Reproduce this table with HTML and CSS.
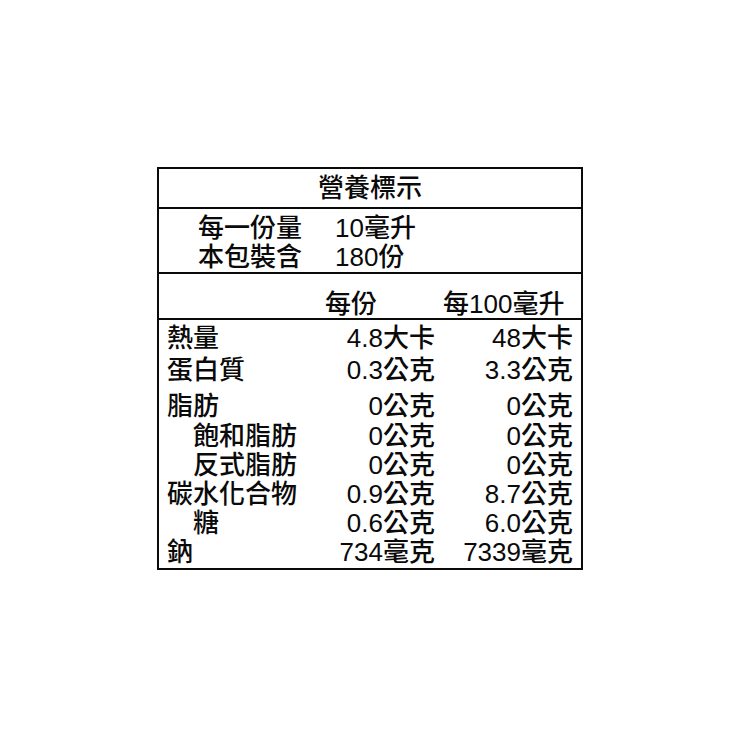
FILE: index.html
```html
<!DOCTYPE html>
<html lang="zh-Hant">
<head>
<meta charset="utf-8">
<title>營養標示</title>
<link rel="stylesheet" href="styles.css">
</head>
<body>
<div class="page">
  <div class="label">
    <div class="title">營養標示</div>
    <div class="serving">
      <div class="srow"><span class="skey">每一份量</span><span>10毫升</span></div>
      <div class="srow"><span class="skey">本包裝含</span><span>180份</span></div>
    </div>
    <div class="head">
      <span></span><span class="h1">每份</span><span class="h2">每100毫升</span>
    </div>
    <div class="body">
      <div class="row r-energy"><span>熱量</span><span class="v">4.8大卡</span><span class="v">48大卡</span></div>
      <div class="row r-protein"><span>蛋白質</span><span class="v">0.3公克</span><span class="v">3.3公克</span></div>
      <div class="row r-fat"><span>脂肪</span><span class="v">0公克</span><span class="v">0公克</span></div>
      <div class="row"><span class="sub">飽和脂肪</span><span class="v">0公克</span><span class="v">0公克</span></div>
      <div class="row r-trans"><span class="sub">反式脂肪</span><span class="v">0公克</span><span class="v">0公克</span></div>
      <div class="row"><span>碳水化合物</span><span class="v">0.9公克</span><span class="v">8.7公克</span></div>
      <div class="row"><span class="sub">糖</span><span class="v">0.6公克</span><span class="v">6.0公克</span></div>
      <div class="row"><span>鈉</span><span class="v">734毫克</span><span class="v">7339毫克</span></div>
    </div>
  </div>
</div>
</body>
</html>
```
FILE: styles.css
```css
html, body {
  margin: 0;
  padding: 0;
  background: #fff;
}

.page {
  padding: 167px 0 0 157px;
  font-family: "Liberation Sans", "Noto Sans CJK TC", sans-serif;
  font-size: 26px;
  font-weight: 500;
  color: #0a0a0a;
}

.label {
  box-sizing: border-box;
  width: 426px;
  height: 403px;
  border: 2px solid #0a0a0a;
  display: flex;
  flex-direction: column;
}

.title {
  height: 38px;
  line-height: 38px;
  text-align: center;
  border-bottom: 2px solid #0a0a0a;
}

.serving {
  height: 65px;
  box-sizing: border-box;
  padding: 5px 0 0 39px;
  border-bottom: 2px solid #0a0a0a;
}

.srow {
  display: flex;
  height: 28.5px;
  line-height: 28.5px;
}

.skey {
  width: 137px;
}

.head {
  height: 46px;
  box-sizing: border-box;
  padding: 15px 8px 0 8px;
  border-bottom: 2px solid #0a0a0a;
  display: grid;
  grid-template-columns: 148px 120px 138px;
  line-height: 30px;
}

.h1 {
  padding-left: 10px;
}

.h2 {
  padding-left: 8px;
}

.body {
  padding: 3px 8px 0 8px;
}

.row {
  display: grid;
  grid-template-columns: 148px 120px 138px;
  height: 29px;
  line-height: 30px;
}

.r-energy { margin-bottom: 3px; }
.r-protein { margin-bottom: 7px; }
.r-fat { margin-bottom: 1px; }

.v {
  text-align: right;
  white-space: nowrap;
}

.sub {
  padding-left: 26px;
}
```
